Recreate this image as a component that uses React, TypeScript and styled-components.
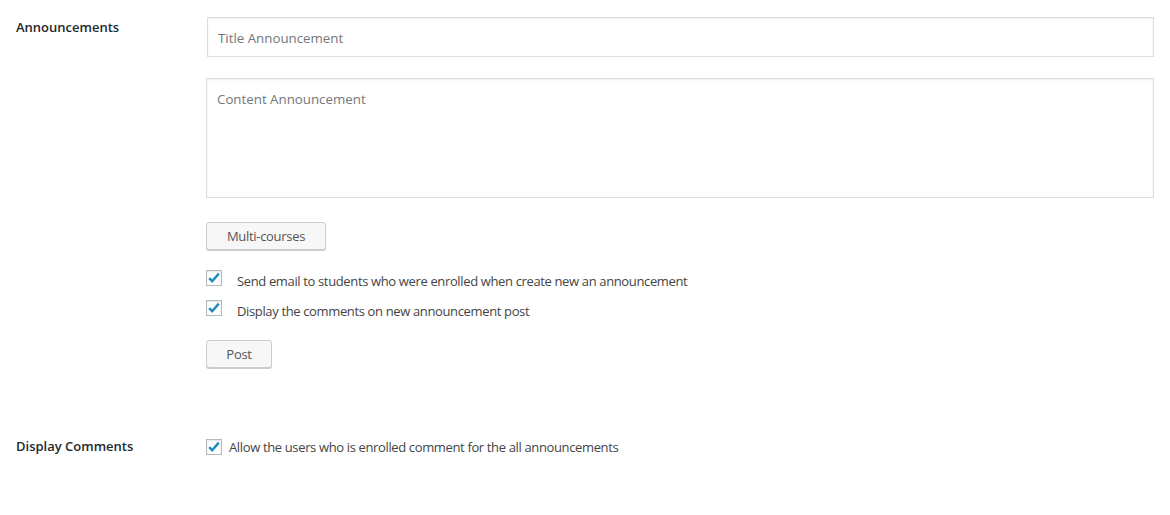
import React from "react";
import styled, { createGlobalStyle } from "styled-components";

const Global = createGlobalStyle`
  html, body { margin: 0; padding: 0; background: #ffffff; }
  body { font-family: "Open Sans", "Noto Sans", sans-serif; color: #444; }
  * { box-sizing: border-box; }
`;

const Page = styled.div`
  width: 1170px;
  height: 515px;
  padding: 17px 16px 0 16px;
  background: #fff;
`;

const Row = styled.div<{ $top?: number }>`
  display: grid;
  grid-template-columns: 190px 948px;
  margin-top: ${(p) => p.$top ?? 0}px;
`;

const Label = styled.div<{ $mt: number }>`
  font-size: 13px;
  font-weight: 600;
  color: #23282d;
  margin-top: ${(p) => p.$mt}px;
  line-height: 18px;
`;

const Field = styled.div`
  display: flex;
  flex-direction: column;
  align-items: flex-start;
`;

const TextInput = styled.input`
  width: 947px;
  height: 40px;
  margin-left: 1px;
  border: 1px solid #ddd;
  box-shadow: inset 0 1px 2px rgba(0, 0, 0, 0.07);
  padding: 2px 10px 0 10px;
  font-family: inherit;
  font-size: 13.3px;
  color: #32373c;
  outline: none;
  &::placeholder { color: #72777c; }
`;

const TextArea = styled.textarea`
  width: 948px;
  height: 120px;
  margin-top: 21px;
  border: 1px solid #ddd;
  box-shadow: inset 0 1px 2px rgba(0, 0, 0, 0.07);
  padding: 11px 10px;
  font-family: inherit;
  font-size: 13.3px;
  color: #32373c;
  resize: none;
  outline: none;
  &::placeholder { color: #72777c; }
`;

const Button = styled.button<{ $w: number; $mt: number }>`
  width: ${(p) => p.$w}px;
  height: 28px;
  margin-top: ${(p) => p.$mt}px;
  background: #f7f7f7;
  border: 1px solid #ccc;
  border-radius: 3px;
  box-shadow: 0 1px 0 #ccc;
  color: #555;
  font-family: inherit;
  font-size: 13px;
  letter-spacing: -0.3px;
  line-height: 24px;
  padding: 0;
  cursor: pointer;
`;

const CheckRow = styled.label<{ $gap: number; $mt: number }>`
  display: flex;
  align-items: flex-start;
  gap: ${(p) => p.$gap}px;
  margin-top: ${(p) => p.$mt}px;
  font-size: 13px;
  letter-spacing: -0.36px;
  color: #444;
  line-height: 18px;
`;

const CheckText = styled.span<{ $mt: number }>`
  margin-top: ${(p) => p.$mt}px;
`;

const Box = styled.span`
  width: 16px;
  height: 16px;
  flex: none;
  border: 1px solid #b4b9be;
  background: #fff;
  box-shadow: inset 0 1px 2px rgba(0, 0, 0, 0.1);
  display: flex;
  align-items: center;
  justify-content: center;
`;

const Check = () => (
  <Box>
    <svg width="14" height="14" viewBox="0 0 14 14">
      <path d="M2.2 7.2 L5.2 10.2 L11.8 2.6" fill="none" stroke="#1e8cbe" strokeWidth="2.4" strokeLinejoin="miter" />
    </svg>
  </Box>
);

export default function App() {
  return (
    <Page>
      <Global />
      <Row>
        <Label $mt={1}>Announcements</Label>
        <Field>
          <TextInput placeholder="Title Announcement" />
          <TextArea placeholder="Content Announcement" />
          <Button $w={120} $mt={24}>Multi-courses</Button>
          <CheckRow $gap={15} $mt={20}>
            <Check />
            <CheckText $mt={2}>Send email to students who were enrolled when create new an announcement</CheckText>
          </CheckRow>
          <CheckRow $gap={15} $mt={10}>
            <Check />
            <CheckText $mt={2}>Display the comments on new announcement post</CheckText>
          </CheckRow>
          <Button $w={66} $mt={20}>Post</Button>
        </Field>
      </Row>
      <Row $top={70}>
        <Label $mt={-1}>Display Comments</Label>
        <Field>
          <CheckRow $gap={7} $mt={1}>
            <Check />
            <CheckText $mt={-1}>Allow the users who is enrolled comment for the all announcements</CheckText>
          </CheckRow>
        </Field>
      </Row>
    </Page>
  );
}
